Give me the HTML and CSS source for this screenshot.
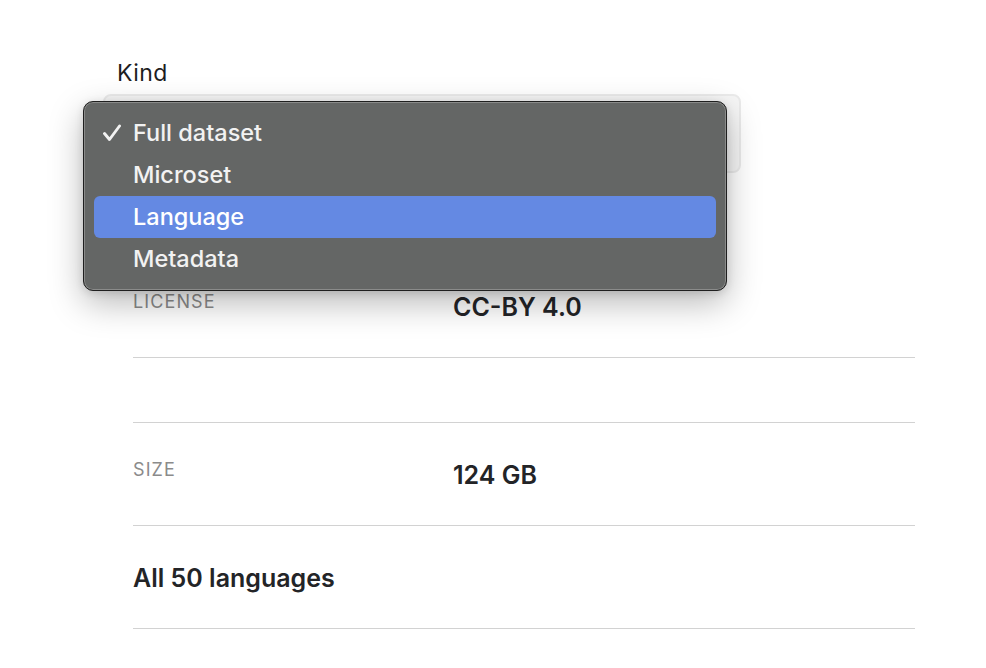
FILE: index.html
```html
<!DOCTYPE html>
<html lang="en">
<head>
<meta charset="utf-8">
<title>Dataset</title>
<link rel="stylesheet" href="styles.css">
</head>
<body>
<div class="page">
  <div class="field">
    <div class="field-label">Kind</div>
    <div class="select">
      <svg class="chev" width="14" height="20" viewBox="0 0 14 20"><path d="M3 7 L7 3 L11 7 M3 13 L7 17 L11 13" fill="none" stroke="#222" stroke-width="1.8" stroke-linecap="round" stroke-linejoin="round"/></svg>
    </div>
    <ul class="menu">
      <li class="item"><svg class="check" width="20" height="18" viewBox="0 0 20 18"><path d="M2.5 9.5 L7.5 15.5 L17.5 2" fill="none" stroke="#f2f2f2" stroke-width="2.9" stroke-linecap="round" stroke-linejoin="round"/></svg>Full dataset</li>
      <li class="item">Microset</li>
      <li class="item active">Language</li>
      <li class="item">Metadata</li>
    </ul>
  </div>

  <div class="rows">
    <div class="row">
      <div class="key">License</div>
      <div class="val">CC-BY 4.0</div>
    </div>
    <div class="row spacer"></div>
    <div class="row">
      <div class="key">Size</div>
      <div class="val">124 GB</div>
    </div>
    <div class="row">
      <div class="val wide">All 50 languages</div>
    </div>
  </div>
</div>
</body>
</html>
```
FILE: styles.css
```css
html, body {
  margin: 0;
  padding: 0;
  background: #ffffff;
}
body {
  font-family: Inter, "Noto Sans", "Liberation Sans", sans-serif;
  color: #222326;
}
.page {
  padding: 60px 71px 0 133px;
}
.field {
  position: relative;
  margin-left: -30px;
  width: 638px;
}
.field-label {
  font-size: 23px;
  line-height: 26px;
  letter-spacing: 0.4px;
  margin-left: 14px;
  color: #1d1d1f;
}
.select {
  margin-top: 8px;
  height: 79px;
  box-sizing: border-box;
  border: 2px solid #ebebeb;
  border-radius: 8px;
  background: #f6f6f6;
  display: flex;
  align-items: center;
  justify-content: flex-end;
  padding: 0 10px 0 30px;
}
.menu {
  position: absolute;
  left: -20px;
  top: 41px;
  width: 644px;
  box-sizing: border-box;
  margin: 0;
  list-style: none;
  padding: 10px 10px;
  background: #646665;
  border: 1px solid #1f1f1f;
  border-radius: 10px;
  box-shadow: inset 0 0 0 1px #8a8b8a, 0 12px 34px rgba(0, 0, 0, 0.28), 0 2px 8px rgba(0, 0, 0, 0.12);
}
.item {
  position: relative;
  height: 42px;
  line-height: 42px;
  padding-left: 39px;
  border-radius: 6px;
  font-size: 23.5px;
  font-weight: 500;
  color: #f2f2f2;
}
.item.active {
  background: #6489e3;
  color: #ffffff;
}
.check {
  position: absolute;
  left: 8px;
  top: 12px;
}
.rows {
  margin-top: 82px;
}
.row {
  display: grid;
  grid-template-columns: 320px 1fr;
  align-items: start;
  height: 102px;
  box-sizing: content-box;
  border-bottom: 1px solid #d2d2d2;
}
.row.spacer {
  height: 64px;
}
.key {
  padding-top: 36px;
  font-size: 18px;
  line-height: 22px;
  letter-spacing: 1.1px;
  text-transform: uppercase;
  color: #8b8b8b;
}
.val {
  padding-top: 37px;
  font-size: 25px;
  line-height: 30px;
  font-weight: 600;
  color: #232427;
}
.val.wide {
  grid-column: 1 / -1;
  padding-top: 37px;
}
```
